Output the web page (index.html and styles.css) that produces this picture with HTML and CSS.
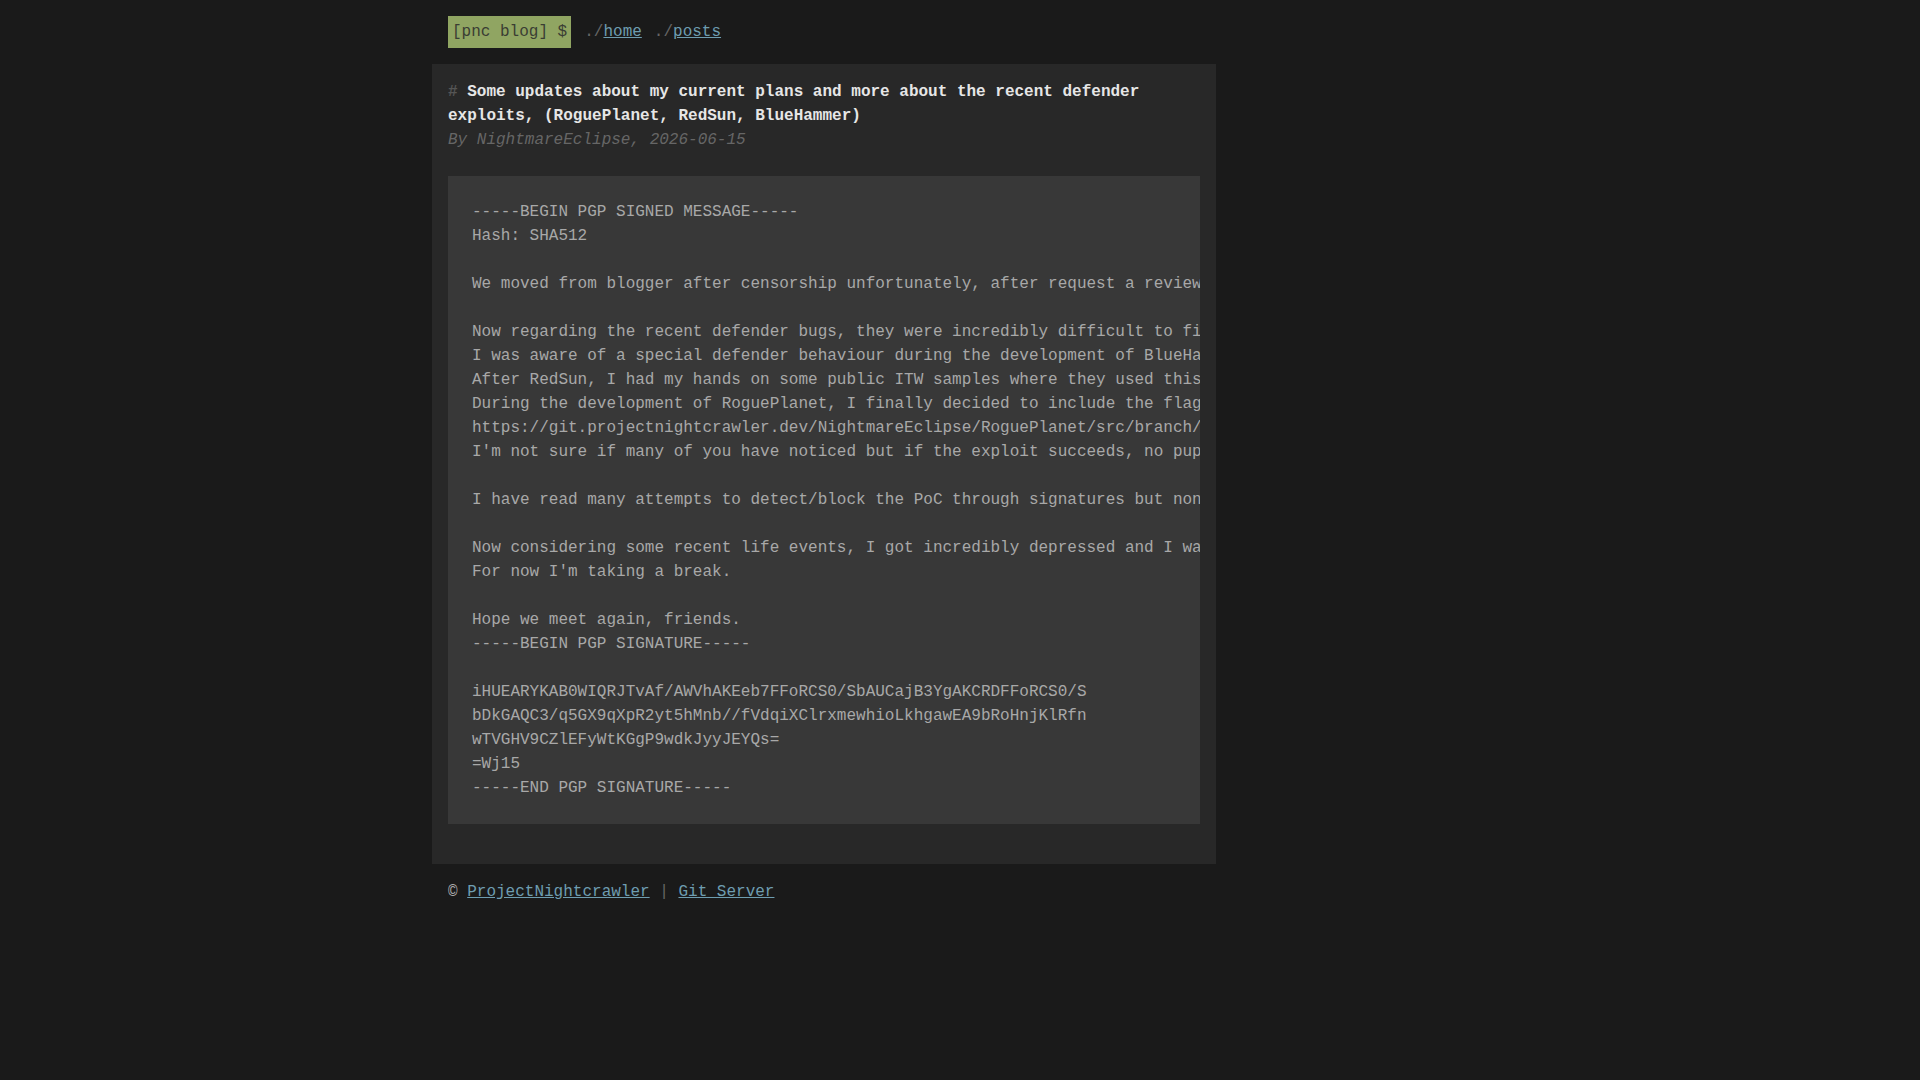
FILE: index.html
```html
<!DOCTYPE html>
<html lang="en">
<head>
<meta charset="utf-8">
<title>pnc blog</title>
<link rel="stylesheet" href="styles.css">
</head>
<body>
<div class="wrap">
  <header class="topbar">
    <span class="brand">[pnc blog] $</span>
    <nav class="nav">
      <span class="nav-item"><span class="dim">./</span><a href="#">home</a></span>
      <span class="nav-item"><span class="dim">./</span><a href="#">posts</a></span>
    </nav>
  </header>
  <main class="card">
    <h1 class="title"><span class="hash">#</span> Some updates about my current plans and more about the recent defender exploits, (RoguePlanet, RedSun, BlueHammer)</h1>
    <p class="meta">By NightmareEclipse, 2026-06-15</p>
    <pre class="body">-----BEGIN PGP SIGNED MESSAGE-----
Hash: SHA512

We moved from blogger after censorship unfortunately, after request a review we were told it violated some policies and the blog was taken down.

Now regarding the recent defender bugs, they were incredibly difficult to find and I spent a considerable amount of time on them.
I was aware of a special defender behaviour during the development of BlueHammer which I used later on.
After RedSun, I had my hands on some public ITW samples where they used this technique.
During the development of RoguePlanet, I finally decided to include the flag that was discovered.
https://git.projectnightcrawler.dev/NightmareEclipse/RoguePlanet/src/branch/main/README.md
I'm not sure if many of you have noticed but if the exploit succeeds, no pup-ups or alerts are shown.

I have read many attempts to detect/block the PoC through signatures but none of them address the root cause.

Now considering some recent life events, I got incredibly depressed and I want to take some time away from all of this.
For now I'm taking a break.

Hope we meet again, friends.
-----BEGIN PGP SIGNATURE-----

iHUEARYKAB0WIQRJTvAf/AWVhAKEeb7FFoRCS0/SbAUCajB3YgAKCRDFFoRCS0/S
bDkGAQC3/q5GX9qXpR2yt5hMnb//fVdqiXClrxmewhioLkhgawEA9bRoHnjKlRfn
wTVGHV9CZlEFyWtKGgP9wdkJyyJEYQs=
=Wj15
-----END PGP SIGNATURE-----</pre>
  </main>
  <footer class="footer">
    <span>&copy; </span><a href="#">ProjectNightcrawler</a><span class="sep"> | </span><a href="#">Git Server</a>
  </footer>
</div>
</body>
</html>
```

FILE: styles.css
```css
html, body {
  margin: 0;
  padding: 0;
  background: #1a1a1a;
}

body {
  font-family: "Liberation Mono", "Courier New", monospace;
  font-size: 16px;
  line-height: 24px;
  color: #aaaaaa;
}

.wrap {
  width: 784px;
  margin-left: 432px;
  padding-top: 16px;
}

.topbar {
  display: flex;
  align-items: center;
  padding-left: 16px;
  gap: 13px;
  margin-bottom: 16px;
}

.brand {
  background: #90a562;
  color: #3a3d33;
  padding: 4px 4px;
  line-height: 24px;
}

.nav {
  display: flex;
  gap: 12px;
}

.dim {
  color: #666666;
}

a {
  color: #6e9db0;
  text-decoration: underline;
}

.card {
  background: #282828;
  padding: 16px 16px 16px;
}

.title {
  margin: 0;
  font-size: 16px;
  line-height: 24px;
  font-weight: bold;
  color: #e6e6e6;
}

.hash {
  color: #555555;
}

.meta {
  margin: 0 0 24px;
  font-style: italic;
  color: #666666;
}

.body {
  margin: 0 0 24px;
  background: #383838;
  padding: 24px;
  font-family: "Liberation Mono", "Courier New", monospace;
  font-size: 16px;
  line-height: 24px;
  color: #a8a8a8;
  overflow: hidden;
  white-space: pre;
}

.footer {
  padding: 16px 16px;
  color: #aaaaaa;
}

.sep {
  color: #666666;
}
```
